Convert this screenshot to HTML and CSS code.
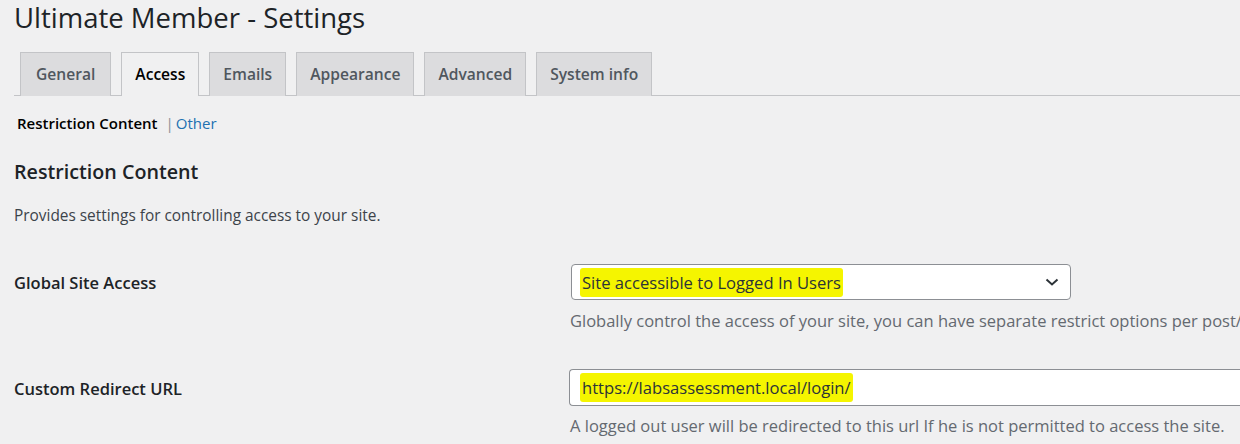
FILE: index.html
```html
<!DOCTYPE html>
<html>
<head>
<meta charset="utf-8">
<link rel="stylesheet" href="styles.css">
</head>
<body>
<div class="wrap">
  <h1 class="title">Ultimate Member - Settings</h1>
  <nav class="tabs">
    <a class="tab">General</a>
    <a class="tab active">Access</a>
    <a class="tab">Emails</a>
    <a class="tab">Appearance</a>
    <a class="tab">Advanced</a>
    <a class="tab">System info</a>
  </nav>
  <div class="subnav"><b class="current">Restriction Content</b><span class="sep">|</span><a class="link">Other</a></div>
  <h2 class="section">Restriction Content</h2>
  <p class="intro">Provides settings for controlling access to your site.</p>
  <div class="form">
    <div class="row row1">
      <div class="label">Global Site Access</div>
      <div class="field">
        <div class="select"><span class="hl">Site accessible to Logged In Users</span>
          <svg class="chev" width="14" height="8" viewBox="0 0 14 8"><path d="M1.5 1.5 L7 6.5 L12.5 1.5" fill="none" stroke="#2c3338" stroke-width="2"/></svg>
        </div>
        <div class="desc">Globally control the access of your site, you can have separate restrict options per post/page by editing the desired item.</div>
      </div>
    </div>
    <div class="row row2">
      <div class="label">Custom Redirect URL</div>
      <div class="field">
        <div class="input"><span class="hl">https://labsassessment.local/login/</span></div>
        <div class="desc">A logged out user will be redirected to this url If he is not permitted to access the site.</div>
      </div>
    </div>
  </div>
</div>
</body>
</html>
```
FILE: styles.css
```css
html, body {
  margin: 0;
  padding: 0;
  background: #f0f0f1;
  overflow: hidden;
}
body {
  font-family: "Open Sans", "Noto Sans", sans-serif;
  color: #1d2327;
  width: 1240px;
  height: 444px;
}
.wrap {
  padding-left: 14px;
}
.title {
  margin: 0;
  font-size: 27.5px;
  font-weight: 400;
  line-height: 36px;
  color: #1d2327;
}
.tabs {
  display: flex;
  margin-top: 16px;
  padding-left: 6px;
  border-bottom: 1px solid #c3c4c7;
  height: 43px;
}
.tab {
  box-sizing: border-box;
  height: 44px;
  margin-right: 10px;
  padding: 0 13px;
  border: 1px solid #c3c4c7;
  border-bottom: none;
  background: #dcdcde;
  color: #50575e;
  font-size: 15.6px;
  font-weight: 600;
  line-height: 43px;
  white-space: nowrap;
}
.tab:first-child {
  padding: 0 15px;
}
.tab.active {
  background: #f0f0f1;
  color: #000;
}
.subnav {
  margin-top: 16px;
  padding-left: 3px;
  font-size: 15px;
  line-height: 22px;
  color: #1d2327;
}
.current {
  font-weight: 600;
  color: #000;
}
.sep {
  color: #8c8f94;
  margin: 0 2px 0 8px;
}
.link {
  color: #2271b1;
}
.section {
  margin: 24px 0 0;
  font-size: 19.7px;
  font-weight: 600;
  line-height: 28px;
  color: #1d2327;
}
.intro {
  margin: 20px 0 0;
  font-size: 15.4px;
  line-height: 20px;
  color: #3c434a;
}
.form {
  margin-top: 38px;
}
.row {
  display: flex;
}
.label {
  width: 556px;
  flex: none;
  font-size: 16.5px;
  font-weight: 600;
  line-height: 20px;
  color: #1d2327;
  padding-top: 9px;
}
.row2 .label {
  padding-top: 10px;
}
.field {
  flex: 1;
  min-width: 0;
}
.select {
  box-sizing: border-box;
  width: 500px;
  height: 36px;
  margin-left: 1px;
  border: 1px solid #8c8f94;
  border-radius: 4px;
  background: #fff;
  display: flex;
  align-items: center;
  justify-content: space-between;
  padding: 0 11px 0 8px;
  font-size: 16.6px;
  color: #2c3338;
  white-space: nowrap;
}
.input {
  box-sizing: border-box;
  width: 700px;
  height: 37px;
  margin-left: -1px;
  border: 1px solid #8c8f94;
  border-right: none;
  border-radius: 4px 0 0 4px;
  background: #fff;
  display: flex;
  align-items: center;
  padding: 0 10px;
  font-size: 16.6px;
  color: #2c3338;
  white-space: nowrap;
}
.hl {
  background: #f5f500;
  padding: 3px 2px;
  border-radius: 3px;
}
.chev {
  flex: none;
}
.desc {
  margin-top: 11px;
  font-size: 16.5px;
  line-height: 20px;
  color: #646970;
  white-space: nowrap;
}
.row2 .desc {
  margin-top: 10px;
}
.row2 {
  margin-top: 38px;
}
```
